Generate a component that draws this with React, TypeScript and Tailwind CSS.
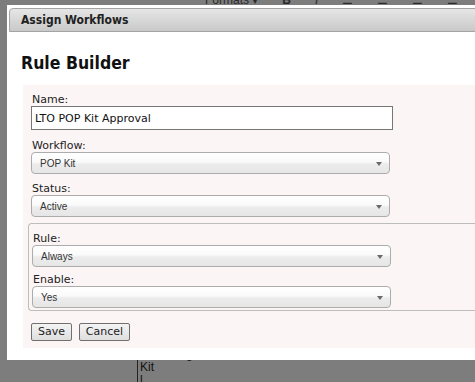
import React from 'react'

const sans = "font-['DejaVu_Sans','Verdana',sans-serif]"

function Sel({ value }: { value: string }) {
  return (
    <div className="relative flex h-[22px] w-[359px] items-center rounded-[4px] border border-[#acacac] bg-[linear-gradient(#ffffff_0%,#fafafa_45%,#ececec_55%,#e6e6e6_100%)] pl-[8px] font-['Liberation_Sans',Arial,sans-serif] text-[10px] text-[#333]">
      {value}
      <span className="absolute right-[7px] top-[9px] h-0 w-0 border-x-[3px] border-t-[4px] border-x-transparent border-t-[#6a6a6a]" />
    </div>
  )
}

function Label({ children, className = '' }: { children: React.ReactNode; className?: string }) {
  return <div className={`h-[13px] pl-[1px] text-[11px] leading-[13px] text-[#222] ${className}`}>{children}</div>
}

export default function App() {
  return (
    <div className={`relative h-[382px] w-[475px] overflow-hidden bg-[#7d7d7d] ${sans}`}>
      {/* page behind the modal */}
      <div className="absolute left-0 top-[-9px] flex items-center gap-[24px] pl-[205px] font-['Liberation_Sans',Arial,sans-serif] text-[12px] text-[#2a2a2a]">
        <span>Formats ▾</span>
        <span className="font-bold">B</span>
        <span className="italic">I</span>
        <span>☰</span>
        <span>☰</span>
        <span>☰</span>
        <span>☰</span>
      </div>
      <div className="absolute left-[137px] top-[348px] h-[40px] border-l border-[#222] pl-[2px] font-['Liberation_Sans',Arial,sans-serif] text-[12px] leading-[13px] text-[#111]">
        <div>Marketing</div>
        <div>Kit</div>
        <div>l</div>
      </div>

      {/* dialog */}
      <div className="absolute left-[7px] top-[5px] h-[355px] w-[520px] bg-white pl-[2px] pt-[3px]">
        <div className="flex h-[24px] items-center rounded-tl-[4px] border border-[#a3a3a3] bg-[linear-gradient(#e6e6e6,#c9c9c9)] pl-[11px] text-[12px] font-bold text-[#222] font-stretch-condensed">
          Assign Workflows
        </div>
        <div className="pl-[12px]">
          <h1 className="mt-[19px] h-[24px] text-[17.5px] leading-[24px] font-bold text-[#111] font-stretch-condensed">Rule Builder</h1>
          <div className="ml-[2px] mt-[10px] bg-[#fcf5f5] pb-[7px] pl-[8px] pt-[8px]">
            <Label>Name:</Label>
            <input
              defaultValue="LTO POP Kit Approval"
              className="block h-[24px] w-[362px] border border-[#767676] bg-white pl-[3px] text-[11px] text-[#111] outline-none"
            />
            <Label className="mt-[9px]">Workflow:</Label>
            <Sel value="POP Kit" />
            <Label className="mt-[8px]">Status:</Label>
            <Sel value="Active" />
            <div className="-ml-[3px] mt-[6px] rounded-tl-[4px] rounded-bl-[4px] border border-r-0 border-[#bdbdbd] pb-[2px] pl-[3px] pt-[8px]">
              <Label>Rule:</Label>
              <Sel value="Always" />
              <Label className="mt-[6px]">Enable:</Label>
              <Sel value="Yes" />
            </div>
            <div className="mt-[12px] flex gap-[7px]">
              <button className="h-[18px] w-[41px] rounded-[2px] border border-[#707070] bg-[linear-gradient(#f4f4f4,#dedede)] text-[11px] leading-[16px] text-[#222]">Save</button>
              <button className="h-[18px] w-[51px] rounded-[2px] border border-[#707070] bg-[linear-gradient(#f4f4f4,#dedede)] text-[11px] leading-[16px] text-[#222]">Cancel</button>
            </div>
          </div>
        </div>
      </div>
    </div>
  )
}
